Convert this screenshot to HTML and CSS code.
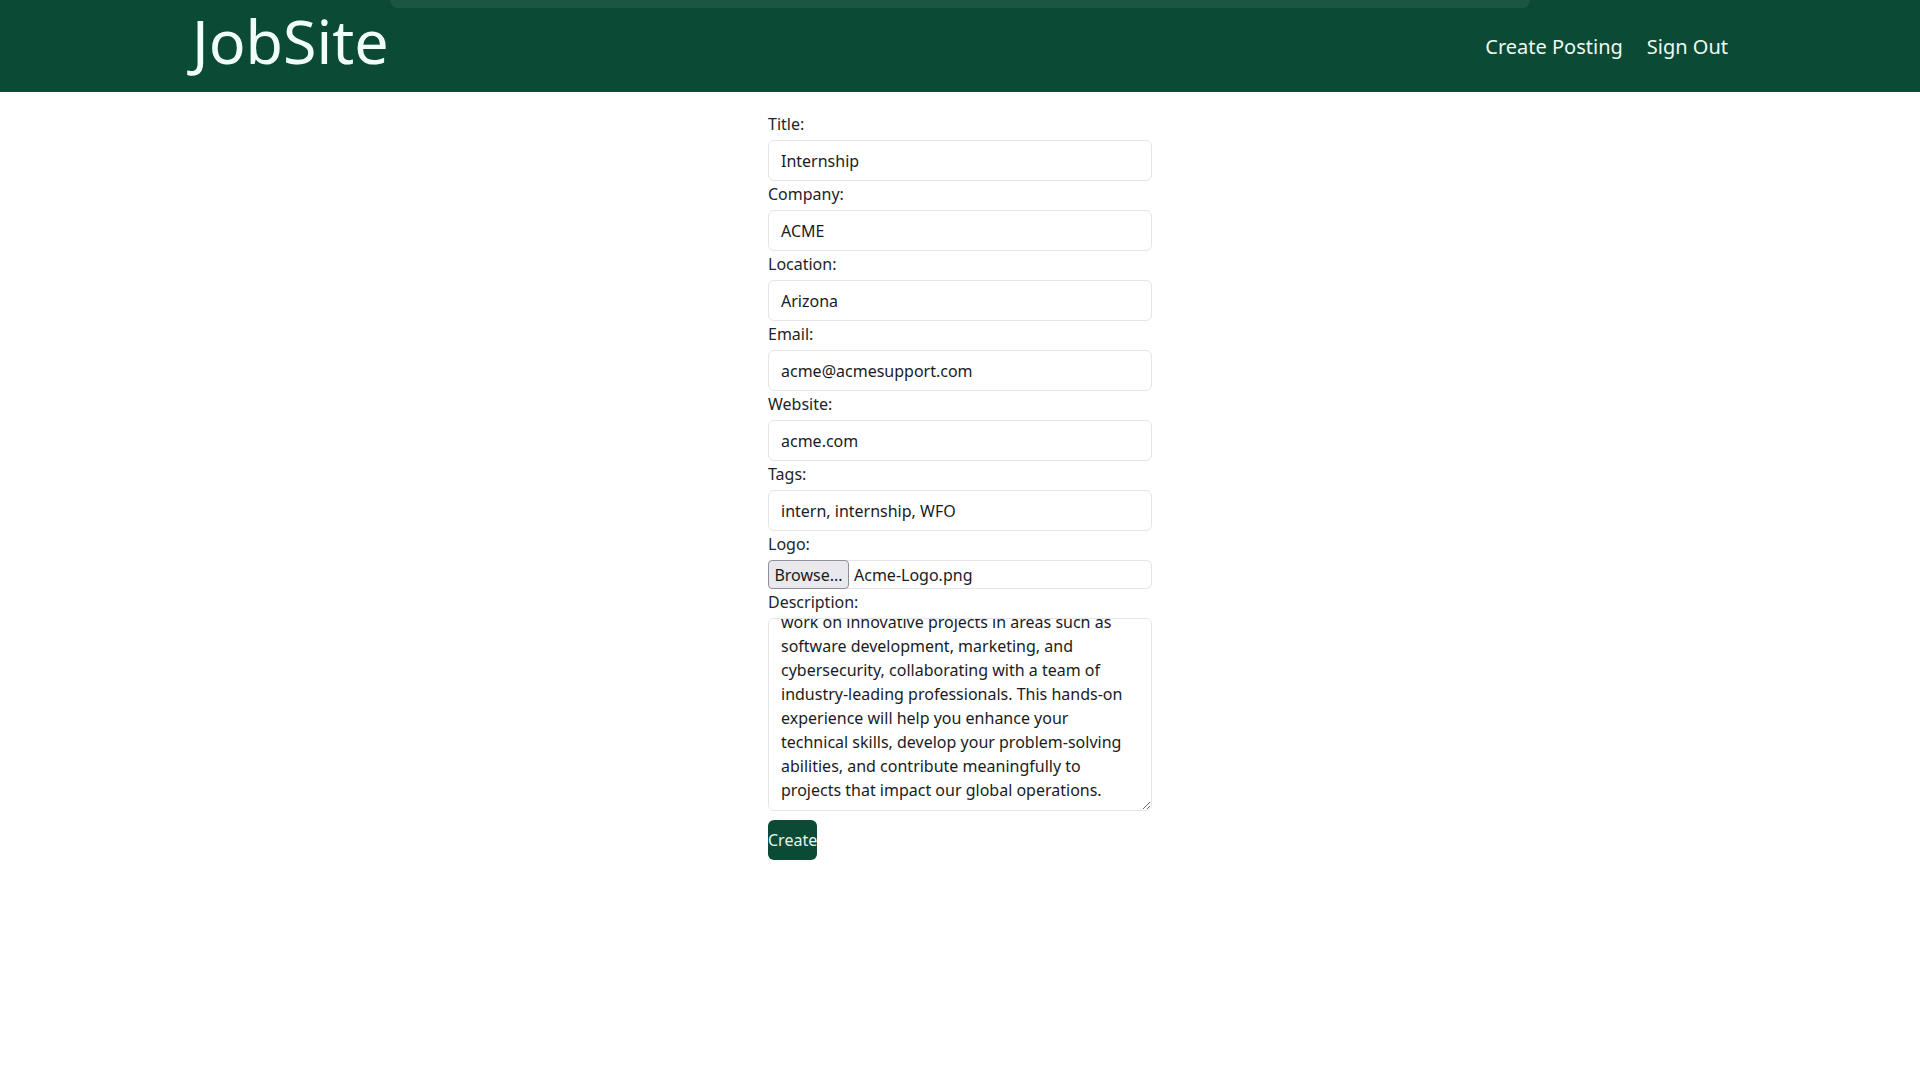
FILE: index.html
```html
<!DOCTYPE html>
<html lang="en">
<head>
<meta charset="utf-8">
<title>JobSite - Create Posting</title>
<link rel="stylesheet" href="styles.css">
</head>
<body>
<header class="site-header">
  <div class="top-peek"></div>
  <a class="brand" href="#">JobSite</a>
  <nav class="nav">
    <a class="nav-link" href="#">Create Posting</a>
    <a class="nav-link" href="#">Sign Out</a>
  </nav>
</header>
<main class="main">
  <form class="posting-form">
    <label class="field-label" for="title">Title:</label>
    <input class="field-input" id="title" type="text" value="Internship">
    <label class="field-label" for="company">Company:</label>
    <input class="field-input" id="company" type="text" value="ACME">
    <label class="field-label" for="location">Location:</label>
    <input class="field-input" id="location" type="text" value="Arizona">
    <label class="field-label" for="email">Email:</label>
    <input class="field-input" id="email" type="text" value="acme@acmesupport.com">
    <label class="field-label" for="website">Website:</label>
    <input class="field-input" id="website" type="text" value="acme.com">
    <label class="field-label" for="tags">Tags:</label>
    <input class="field-input" id="tags" type="text" value="intern, internship, WFO">
    <label class="field-label" for="logo">Logo:</label>
    <div class="file-field" id="logo">
      <button type="button" class="file-button">Browse...</button>
      <span class="file-name">Acme-Logo.png</span>
    </div>
    <label class="field-label" for="description">Description:</label>
    <textarea class="field-textarea" id="description" rows="7">ACME is offering an exciting internship opportunity for students and recent graduates who want to gain real-world experience. Interns will get the opportunity to
work on innovative projects in areas such as software development, marketing, and cybersecurity, collaborating with a team of industry-leading professionals. This hands-on experience will help you enhance your technical skills, develop your problem-solving abilities, and contribute meaningfully to projects that impact our global operations.</textarea>
    <button type="submit" class="submit-button">Create</button>
  </form>
</main>
<script src="script.js"></script>
</body>
</html>
```

FILE: styles.css
```css
* {
  box-sizing: border-box;
}

html, body {
  margin: 0;
  padding: 0;
  background: #ffffff;
  font-family: "Noto Sans", "Open Sans", "DejaVu Sans", sans-serif;
  color: #212529;
}

.site-header {
  position: relative;
  height: 92px;
  background: #0b4a35;
  display: flex;
  align-items: center;
  justify-content: space-between;
  padding: 0 192px;
}

.top-peek {
  position: absolute;
  top: 0;
  left: 390px;
  width: 1140px;
  height: 8px;
  background: rgba(255, 255, 255, 0.07);
  border-radius: 0 0 10px 10px;
}

.brand {
  font-size: 61px;
  line-height: 83px;
  color: #f2fff8;
  text-decoration: none;
  margin-bottom: 11px;
}

.nav {
  display: flex;
  gap: 24px;
}

.nav-link {
  font-size: 20px;
  color: #eefaf3;
  text-decoration: none;
}

.main {
  display: flex;
  justify-content: center;
  padding-top: 21px;
}

.posting-form {
  width: 384px;
  display: flex;
  flex-direction: column;
  align-items: flex-start;
}

.field-label {
  display: block;
  font-size: 16px;
  line-height: 22px;
  margin-bottom: 5px;
}

.field-input {
  width: 100%;
  height: 41px;
  margin: 0 0 2px;
  padding: 0 12px;
  font-family: inherit;
  font-size: 16px;
  color: #1b1b1f;
  background: #ffffff;
  border: 1px solid #e3e5e8;
  border-radius: 6px;
  outline: none;
}

.file-field {
  width: 100%;
  height: 29px;
  margin-bottom: 2px;
  display: flex;
  align-items: stretch;
  border: 1px solid #e3e5e8;
  border-left: 0;
  border-radius: 6px;
}

.file-button {
  margin: -1px 0;
  padding: 0 4px;
  width: 81px;
  font-family: inherit;
  font-size: 16px;
  color: #1b1b1f;
  background: #e9e9ed;
  border: 1px solid #8f8f9d;
  border-radius: 4px;
}

.file-name {
  display: flex;
  align-items: center;
  padding-left: 5px;
  font-size: 16px;
  color: #1b1b1f;
}

.field-textarea {
  width: 100%;
  height: 193px;
  margin: 0 0 9px;
  padding: 8px 12px;
  font-family: inherit;
  font-size: 16px;
  line-height: 24px;
  color: #1b1b1f;
  background: #ffffff;
  border: 1px solid #e3e5e8;
  border-radius: 6px;
  outline: none;
  scrollbar-width: none;
}

.submit-button {
  width: 49px;
  height: 40px;
  padding: 0;
  font-family: inherit;
  font-size: 16px;
  text-align: left;
  white-space: nowrap;
  overflow: visible;
  color: #e6f4ec;
  background: #0b4a35;
  border: 0;
  border-radius: 6px;
}
```

FILE: script.js
```js
var ta = document.getElementById('description');
ta.scrollTop = ta.scrollHeight;
```
